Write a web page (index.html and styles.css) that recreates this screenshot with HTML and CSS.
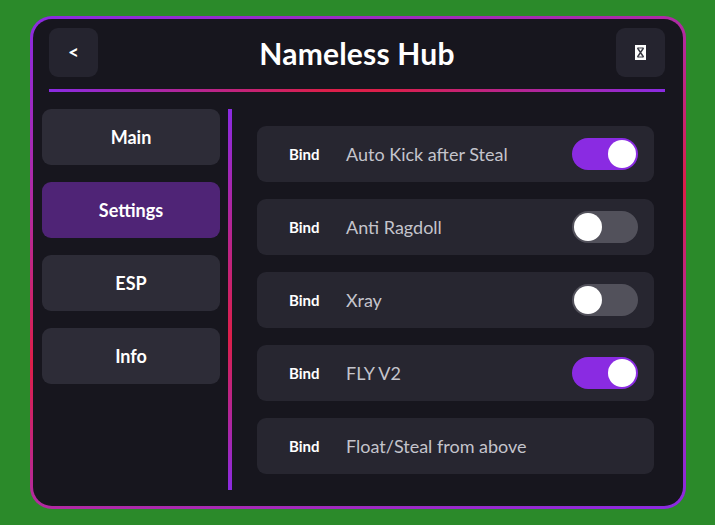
FILE: index.html
```html
<!DOCTYPE html>
<html>
<head>
<meta charset="utf-8">
<link rel="stylesheet" href="styles.css">
</head>
<body>
<div class="frame">
  <div class="panel">
    <div class="header">
      <div class="icon-btn back">&lt;</div>
      <div class="title">Nameless Hub</div>
      <div class="icon-btn close">
        <svg width="11" height="15" viewBox="0 0 11 15">
          <rect x="0" y="0" width="11" height="15" fill="#ffffff"/>
          <path d="M2.5 3 L8.5 12 M8.5 3 L2.5 12" stroke="#3a3a44" stroke-width="1.4" fill="none"/>
          <path d="M2.5 3 H8.5 M2.5 12 H8.5" stroke="#3a3a44" stroke-width="1" fill="none"/>
        </svg>
      </div>
    </div>
    <div class="divider"></div>
    <div class="body">
      <div class="sidebar">
        <div class="tab">Main</div>
        <div class="tab active">Settings</div>
        <div class="tab">ESP</div>
        <div class="tab">Info</div>
      </div>
      <div class="vline"></div>
      <div class="content">
        <div class="row">
          <span class="bind">Bind</span>
          <span class="label">Auto Kick after Steal</span>
          <span class="toggle on"><span class="knob"></span></span>
        </div>
        <div class="row">
          <span class="bind">Bind</span>
          <span class="label">Anti Ragdoll</span>
          <span class="toggle"><span class="knob"></span></span>
        </div>
        <div class="row">
          <span class="bind">Bind</span>
          <span class="label">Xray</span>
          <span class="toggle"><span class="knob"></span></span>
        </div>
        <div class="row">
          <span class="bind">Bind</span>
          <span class="label">FLY V2</span>
          <span class="toggle on"><span class="knob"></span></span>
        </div>
        <div class="row">
          <span class="bind">Bind</span>
          <span class="label">Float/Steal from above</span>
        </div>
      </div>
    </div>
  </div>
</div>
</body>
</html>
```

FILE: styles.css
```css
* { box-sizing: border-box; }
html, body { margin: 0; padding: 0; }
body {
  width: 715px;
  height: 525px;
  background: #2b8a2a;
  font-family: "Lato", "Noto Sans", sans-serif;
  overflow: hidden;
}
.frame {
  margin: 16px 0 0 30px;
  width: 656px;
  height: 493px;
  padding: 3px;
  border-radius: 22px;
  background: linear-gradient(165deg, #8a2be2 0%, #b42a9c 30%, #dc1f4a 52%, #b42a9c 72%, #8a2be2 100%);
}
.panel {
  width: 100%;
  height: 100%;
  border-radius: 19px;
  background: #17161e;
  padding-top: 9px;
}
.header {
  display: flex;
  align-items: center;
  justify-content: space-between;
  margin: 0 18px 0 16px;
  height: 49px;
}
.icon-btn {
  width: 49px;
  height: 49px;
  border-radius: 9px;
  background: #25242f;
  display: flex;
  align-items: center;
  justify-content: center;
  color: #ffffff;
}
.back {
  font-weight: 700;
  font-size: 19px;
  padding-bottom: 3px;
}
.title {
  color: #ffffff;
  font-weight: 700;
  font-size: 30px;
  letter-spacing: 0.2px;
}
.divider {
  margin: 12px 18px 0 16px;
  height: 3px;
  background: linear-gradient(90deg, #8a2be2 0%, #dc1f4a 45%, #dc1f4a 55%, #8a2be2 100%);
}
.body {
  display: flex;
  margin-top: 17px;
  padding-left: 9px;
}
.sidebar {
  width: 178px;
  display: flex;
  flex-direction: column;
  gap: 17px;
}
.tab {
  height: 56px;
  border-radius: 9px;
  background: #2d2c37;
  color: #ffffff;
  font-weight: 700;
  font-size: 18px;
  display: flex;
  align-items: center;
  justify-content: center;
}
.tab.active {
  background: #4f2476;
}
.vline {
  margin-left: 8px;
  width: 4px;
  height: 381px;
  background: linear-gradient(180deg, #8a2be2 0%, #dc1f4a 60%, #8a2be2 100%);
}
.content {
  margin-left: 25px;
  padding-top: 17px;
  width: 397px;
  display: flex;
  flex-direction: column;
  gap: 17px;
}
.row {
  height: 56px;
  border-radius: 9px;
  background: #272630;
  display: flex;
  align-items: center;
  padding: 0 16px 0 32px;
}
.bind {
  color: #ffffff;
  font-weight: 700;
  font-size: 15px;
  width: 57px;
}
.label {
  color: #c4c4cc;
  font-size: 18px;
  flex: 1;
}
.toggle {
  width: 66px;
  height: 32px;
  border-radius: 16px;
  background: #52515b;
  padding: 2px;
  display: flex;
  justify-content: flex-start;
}
.toggle.on {
  background: #8a2be2;
  justify-content: flex-end;
}
.knob {
  width: 28px;
  height: 28px;
  border-radius: 50%;
  background: #ffffff;
}
```
